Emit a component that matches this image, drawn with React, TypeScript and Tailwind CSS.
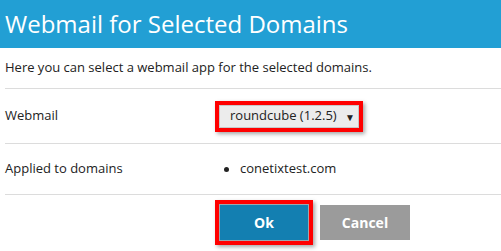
import React, { useState } from 'react';

const App: React.FC = () => {
  const [webmail, setWebmail] = useState('roundcube (1.2.5)');

  return (
    <div className="w-[501px] h-[251px] bg-white font-['Open_Sans',sans-serif] text-[#222] overflow-hidden">
      <div className="h-[48px] bg-[#229fd4] flex items-center px-[5px]">
        <h1 className="text-[24px] text-white leading-none">Webmail for Selected Domains</h1>
      </div>
      <div className="ml-[5px]">
        <p className="h-[40px] flex items-center text-[13px]">
          Here you can select a webmail app for the selected domains.
        </p>
        <div className="border-t border-[#dcdcdc] h-[55px] flex items-center">
          <div className="w-[210px] text-[13px]">Webmail</div>
          <div className="border-[4px] border-[#ff0000] shadow-[2px_2px_4px_rgba(0,0,0,0.35)]">
            <div className="relative w-[140px] h-[23px] bg-[#ececec] border border-[#c8c8c8] flex items-center">
              <select
                value={webmail}
                onChange={(e) => setWebmail(e.target.value)}
                className="appearance-none bg-transparent w-full h-full pl-[10px] text-[13px] text-[#222] outline-none"
              >
                <option>roundcube (1.2.5)</option>
                <option>horde</option>
              </select>
              <span className="absolute right-[3px] top-[4px] text-[10px] text-[#222] pointer-events-none">▼</span>
            </div>
          </div>
        </div>
        <div className="border-t border-b border-[#dcdcdc] h-[52px] flex items-center">
          <div className="w-[210px] text-[13px]">Applied to domains</div>
          <ul className="text-[13px]">
            <li className="flex items-center">
              <span className="w-[5px] h-[5px] rounded-full bg-[#222] ml-[9px] mr-[11px]"></span>
              conetixtest.com
            </li>
          </ul>
        </div>
        <div className="flex items-center gap-[7px] pl-[210px] pt-[5px]">
          <div className="border-[4px] border-[#ff0000] shadow-[2px_2px_4px_rgba(0,0,0,0.35)]">
            <button className="w-[90px] h-[37px] bg-[#137fb1] border border-[#9aa8b0] text-white text-[14px] font-bold">
              Ok
            </button>
          </div>
          <button className="w-[90px] h-[35px] bg-[#9b9b9b] text-white text-[14px] font-bold">
            Cancel
          </button>
        </div>
      </div>
    </div>
  );
};

export default App;
